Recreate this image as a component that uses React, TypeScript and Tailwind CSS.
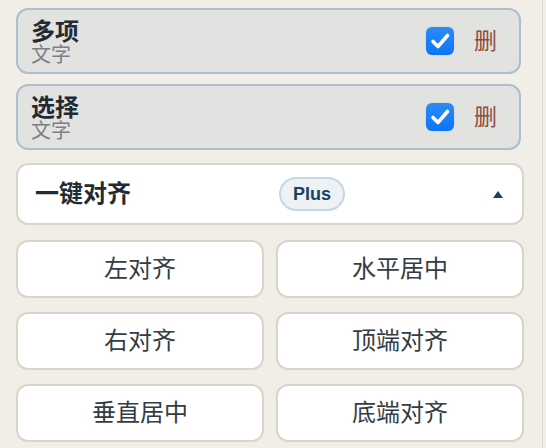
import React from "react";

const FONT = { fontFamily: '"Liberation Sans", "Noto Sans CJK SC", sans-serif' };

function Check() {
  return (
    <div className="w-[28px] h-[28px] rounded-[6px] bg-gradient-to-b from-[#2a8bf8] to-[#0b74f5] flex items-center justify-center shadow-[0_0_1px_rgba(0,0,0,0.3)]">
      <svg width="28" height="28" viewBox="0 0 28 28">
        <path d="M7 14.5 L12 19.5 L21.5 8.5" fill="none" stroke="white" strokeWidth="3.6" strokeLinecap="round" strokeLinejoin="round" />
      </svg>
    </div>
  );
}

function Item({ title }: { title: string }) {
  return (
    <div className="h-[66px] mr-[3px] rounded-[12px] border-2 border-[#adbfcc] bg-[#e2e2e0] flex items-center pl-[13px] pr-[22px]">
      <div className="flex-1 flex flex-col pt-[3px]">
        <span className="text-[24px] leading-[24px] font-bold text-[#222b33]">{title}</span>
        <span className="text-[20px] leading-[22px] text-[#7b8088]">文字</span>
      </div>
      <Check />
      <span className="ml-[20px] text-[23px] leading-none text-[#8e4b3e]">删</span>
    </div>
  );
}

function Btn({ label }: { label: string }) {
  return (
    <div className="h-[58px] rounded-[12px] border-2 border-[#d9d4c7] bg-white flex items-center justify-center text-[24px] text-[#343c45]">
      {label}
    </div>
  );
}

export default function App() {
  return (
    <div className="w-[546px] h-[448px] bg-[#f1eee8] flex overflow-hidden" style={FONT}>
      <div className="w-[508px] ml-[16px] pt-[8px] flex flex-col">
        <div className="flex flex-col gap-[10px]">
          <Item title="多项" />
          <Item title="选择" />
        </div>
        <div className="mt-[13px] h-[62px] rounded-[12px] border-2 border-[#d9d4c7] bg-white flex items-center justify-between pl-[17px] pr-[19px]">
          <span className="text-[24px] font-bold text-[#222b33]">一键对齐</span>
          <span className="h-[34px] px-[12px] rounded-full border-2 border-[#c6d6e3] bg-[#eef2f5] flex items-center text-[18px] font-bold text-[#1d4060]">Plus</span>
          <svg width="10" height="7" viewBox="0 0 10 7">
            <polygon points="0,7 5,0 10,7" fill="#1d4060" />
          </svg>
        </div>
        <div className="mt-[15px] grid grid-cols-2 gap-x-[12px] gap-y-[14px]">
          <Btn label="左对齐" />
          <Btn label="水平居中" />
          <Btn label="右对齐" />
          <Btn label="顶端对齐" />
          <Btn label="垂直居中" />
          <Btn label="底端对齐" />
        </div>
      </div>
      <div className="ml-[18px] w-[1px] h-full bg-[#dcd8cf]" />
    </div>
  );
}
